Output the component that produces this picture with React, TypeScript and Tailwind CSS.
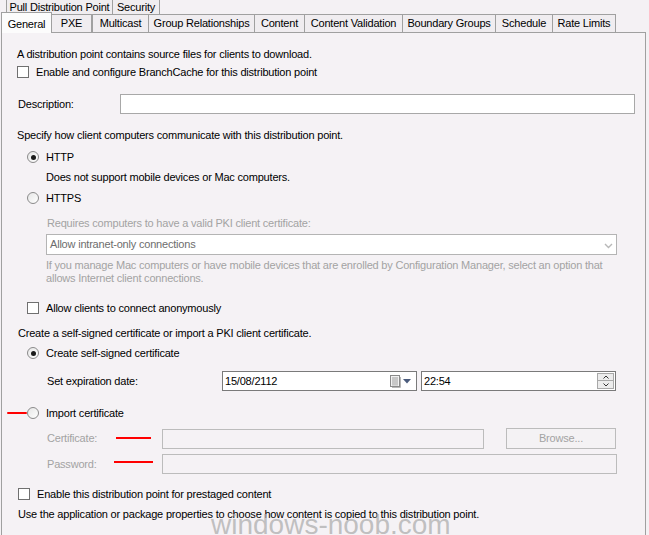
import React from "react";

const font = { fontFamily: '"Liberation Sans", Arial, sans-serif' };

function Checkbox({ label }: { label: string }) {
  return (
    <div className="flex h-[16px] items-center">
      <span className="h-[12px] w-[12px] shrink-0 border border-[#707070] bg-white" />
      <span className="ml-[7px]">{label}</span>
    </div>
  );
}

function Radio({ label, checked }: { label: string; checked?: boolean }) {
  return (
    <div className="flex h-[16px] items-center">
      <span className="flex h-[12px] w-[12px] shrink-0 items-center justify-center rounded-full border border-[#8a8a8a] bg-gradient-to-br from-[#e6e6e6] to-white">
        {checked && <span className="h-[5px] w-[5px] rounded-full bg-[#1a1a1a]" />}
      </span>
      <span className="ml-[7px]">{label}</span>
    </div>
  );
}

function Tab({ label, w, selected }: { label: string; w: number; selected?: boolean }) {
  if (selected) {
    return (
      <div
        className="relative flex h-[21px] shrink-0 items-start justify-center border-l border-r border-t border-[#a0a0a0] bg-[#fcfcfc] pt-[3px]"
        style={{ width: w }}
      >
        {label}
      </div>
    );
  }
  return (
    <div
      className="mb-[1px] flex h-[18px] shrink-0 items-center justify-center border-r border-t border-[#a0a0a0] bg-[#f0edf0]"
      style={{ width: w }}
    >
      {label}
    </div>
  );
}

export default function App() {
  return (
    <div
      className="relative h-[535px] w-[649px] overflow-hidden whitespace-nowrap bg-[#f4f1f4] text-[11px] tracking-[-0.2px] text-black"
      style={font}
    >
      {/* upper tab row */}
      <div className="flex h-[14px] pl-[6px]">
        <div className="flex h-[14px] w-[107px] items-end justify-center border-l border-r border-[#a0a0a0] bg-[#f0edf0] pb-[1px] leading-[12px]">
          Pull Distribution Point
        </div>
        <div className="flex h-[14px] w-[47px] items-end justify-center border-r border-[#a0a0a0] bg-[#f0edf0] pb-[1px] leading-[12px]">
          Security
        </div>
      </div>

      {/* lower tab row */}
      <div className="relative z-10 flex h-[19px] items-end pl-[1px]">
        <Tab label="General" w={51} selected />
        <Tab label="PXE" w={40} />
        <div className="mb-[1px] h-[18px] w-0 border-l border-[#a0a0a0]" />
        <Tab label="Multicast" w={56} />
        <Tab label="Group Relationships" w={106} />
        <Tab label="Content" w={50} />
        <Tab label="Content Validation" w={98} />
        <Tab label="Boundary Groups" w={93} />
        <Tab label="Schedule" w={57} />
        <Tab label="Rate Limits" w={63} />
      </div>

      {/* page */}
      <div className="-mt-[1px] ml-[1px] h-[520px] w-[645px] border border-[#a0a0a0] bg-[#f5f2f5] pl-[15px] pt-[13px]">
        <div className="flex h-[16px] items-center">
          A distribution point contains source files for clients to download.
        </div>
        <div className="mt-[2px]">
          <Checkbox label="Enable and configure BranchCache for this distribution point" />
        </div>

        <div className="mt-[14px] flex h-[20px] items-center">
          <span className="w-[103px] pl-[1px]">Description:</span>
          <div className="h-[20px] w-[515px] border border-[#a8a8a8] bg-white" />
        </div>

        <div className="mt-[13px] flex h-[16px] items-center">
          Specify how client computers communicate with this distribution point.
        </div>

        <div className="pl-[10px]">
          <div className="mt-[6px]">
            <Radio label="HTTP" checked />
          </div>
          <div className="mt-[4px] flex h-[16px] items-center pl-[19px]">
            Does not support mobile devices or Mac computers.
          </div>
          <div className="mt-[5px]">
            <Radio label="HTTPS" />
          </div>

          <div className="pl-[19px] text-[#a3a3a3]">
            <div className="mt-[9px] flex h-[16px] items-center pl-[1px]">
              Requires computers to have a valid PKI client certificate:
            </div>
            <div className="mt-[3px] flex h-[21px] w-[571px] items-center justify-between border border-[#b4b4b4] bg-white pl-[3px] pr-[3px] text-[#6d6d6d]">
              <span>Allow intranet-only connections</span>
              <svg width="9" height="6" viewBox="0 0 9 6" className="mt-[2px]">
                <path d="M1 1 L4.5 4.5 L8 1" fill="none" stroke="#b8b8b8" strokeWidth="1.4" />
              </svg>
            </div>
            <div className="mt-[4px] leading-[12px]">
              <div>
                If you manage Mac computers or have mobile devices that are enrolled by Configuration Manager, select an option that
              </div>
              <div className="mt-[1px]">allows Internet client connections.</div>
            </div>
          </div>

          <div className="mt-[16px]">
            <Checkbox label="Allow clients to connect anonymously" />
          </div>
        </div>

        <div className="mt-[9px] flex h-[16px] items-center pl-[1px]">
          Create a self-signed certificate or import a PKI client certificate.
        </div>

        <div className="pl-[10px]">
          <div className="mt-[4px]">
            <Radio label="Create self-signed certificate" checked />
          </div>

          <div className="mt-[10px] flex h-[20px] items-center">
            <span className="w-[195px] pl-[20px]">Set expiration date:</span>
            <div className="flex h-[20px] w-[195px] items-center justify-between border border-[#7a7a7a] bg-white pl-[2px] pr-[5px]">
              <span>15/08/2112</span>
              <span className="flex items-center gap-[2px]">
                <svg width="11" height="13" viewBox="0 0 11 13">
                  <rect x="0.5" y="0.5" width="9" height="11" fill="#f2f2f2" stroke="#8a8a8a" />
                  <path d="M2 3h6M2 5h6M2 7h6M2 9h6M3 2v9M5 2v9M7 2v9" stroke="#b0b0b0" strokeWidth="0.8" />
                  <path d="M10.5 2v10.5H2" fill="none" stroke="#b8b8b8" />
                </svg>
                <svg width="8" height="5" viewBox="0 0 8 5">
                  <path d="M0 0h8L4 4.5z" fill="#4a5b7c" />
                </svg>
              </span>
            </div>
            <div className="ml-[4px] flex h-[20px] w-[195px] items-center justify-between border border-[#7a7a7a] bg-white pl-[2px] pr-[1px]">
              <span>22:54</span>
              <div className="flex flex-col">
                <div className="flex h-[8px] w-[17px] items-center justify-center border border-[#a8a8a8] bg-[#ececec]">
                  <svg width="6" height="4" viewBox="0 0 6 4">
                    <path d="M0.5 3.5L3 1l2.5 2.5" fill="none" stroke="#333" strokeWidth="1" />
                  </svg>
                </div>
                <div className="flex h-[8px] w-[17px] items-center justify-center border border-t-0 border-[#a8a8a8] bg-[#ececec]">
                  <svg width="6" height="4" viewBox="0 0 6 4">
                    <path d="M0.5 0.5L3 3l2.5-2.5" fill="none" stroke="#333" strokeWidth="1" />
                  </svg>
                </div>
              </div>
            </div>
          </div>

          <div className="relative mt-[14px]">
            <Radio label="Import certificate" />
            <span className="absolute left-[-20px] top-[7px] h-[2px] w-[20px] rounded-full bg-[#ff0000]" />
          </div>

          <div className="text-[#a3a3a3]">
            <div className="relative mt-[7px] flex h-[21px] items-center">
              <span className="w-[135px] pl-[20px]">Certificate:</span>
              <span className="absolute left-[89px] top-[9px] h-[2px] w-[35px] bg-[#ff0000]" />
              <div className="h-[20px] w-[322px] border border-[#bcbcbc]" />
              <div className="ml-[22px] flex h-[21px] w-[110px] items-center justify-center border border-[#bcbcbc] bg-[#f4f2f4]">
                Browse...
              </div>
            </div>
            <div className="relative mt-[5px] flex h-[20px] items-center">
              <span className="w-[135px] pl-[20px]">Password:</span>
              <span className="absolute left-[87px] top-[7px] h-[2px] w-[39px] bg-[#ff0000]" />
              <div className="h-[20px] w-[455px] border border-[#bcbcbc]" />
            </div>
          </div>
        </div>

        <div className="mt-[12px] pl-[1px]">
          <Checkbox label="Enable this distribution point for prestaged content" />
        </div>
        <div className="mt-[4px] flex h-[16px] items-center pl-[1px]">
          Use the application or package properties to choose how content is copied to this distribution point.
        </div>
      </div>

      {/* watermark */}
      <div className="pointer-events-none absolute left-[211px] top-[511px] text-[28px] leading-none tracking-normal text-[#a8a8a8]/70">
        windows-noob.com
      </div>
    </div>
  );
}
